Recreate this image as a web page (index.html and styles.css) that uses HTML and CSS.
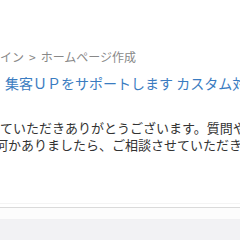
FILE: index.html
```html
<!DOCTYPE html>
<html lang="ja">
<head>
    <meta charset="UTF-8">
    <meta name="viewport" content="width=device-width, initial-scale=1.0">
    <title>ホームページ作成</title>
    <link rel="stylesheet" href="styles.css">
</head>
<body>
    <div class="page">
        <div class="crumbs">デザイン<span class="sep">&gt;</span>ホームページ作成</div>
        <h1 class="title">集客ＵＰをサポートします カスタム対応いたします</h1>
        <p class="intro">ていただきありがとうございます。質問やご要望など<br>何かありましたら、ご相談させていただきます。</p>
    </div>
    <div class="footer">
        <div class="footer-top"></div>
        <div class="footer-bar"></div>
    </div>
</body>
</html>
```

FILE: styles.css
```css
html, body {
    margin: 0;
    padding: 0;
    overflow: hidden;
    font-family: "Noto Sans CJK JP", "Noto Sans", sans-serif;
}
body {
    min-height: 240px;
    background: linear-gradient(#ffffff 220px, #f2f2f4 220px);
}
.page {
    height: 203px;
    white-space: nowrap;
}
.crumbs {
    margin: 0 0 0 -24px;
    padding-top: 49px;
    font-size: 12px;
    line-height: 16px;
    color: #888888;
}
.crumbs .sep {
    margin: 0 5px;
}
.title {
    margin: 7px 0 0 5px;
    font-size: 14px;
    font-weight: normal;
    line-height: 22px;
    color: #3a7cc1;
}
.intro {
    margin: 25px 0 0 -5px;
    text-indent: 5px;
    font-size: 13px;
    line-height: 17px;
    color: #333333;
}
.footer {
    border-top: 1px solid #f4f4f4;
}
.footer-top {
    height: 3px;
    border-bottom: 1px solid #dadada;
}
.footer-bar {
    height: 11px;
    background-color: #fcfcfc;
    border-bottom: 1px solid #f0f0f2;
}
```
